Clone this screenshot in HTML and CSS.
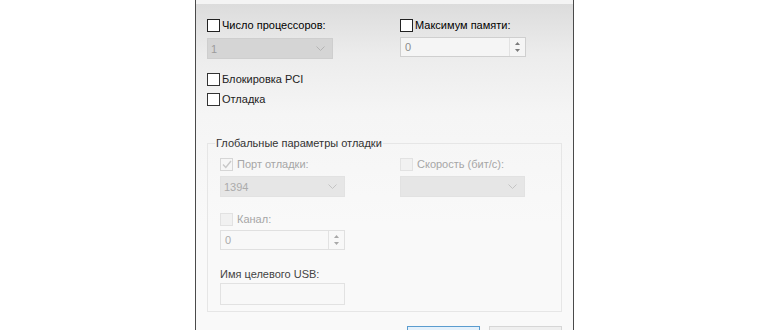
FILE: index.html
```html
<!DOCTYPE html>
<html lang="ru">
<head>
  <meta charset="UTF-8" />
  <title>Дополнительные параметры загрузки</title>
  <link rel="stylesheet" href="styles.css">
</head>
<body>
  <div class="dialog">
    <div class="frame-top"></div>
    <div class="dialog-body">
      <div class="grid top-grid">
        <div class="col">
          <label class="check strong"><span class="box"></span>Число процессоров:</label>
          <div class="select sel-dark"><span>1</span><svg class="chev" width="9" height="5" viewBox="0 0 9 5"><polyline points="0.5,0.5 4.5,4.5 8.5,0.5" fill="none" stroke="#b4b4b4" stroke-width="1"/></svg></div>
          <label class="check gap-pci"><span class="box"></span>Блокировка PCI</label>
          <label class="check gap-dbg"><span class="box"></span>Отладка</label>
        </div>
        <div class="col">
          <label class="check strong"><span class="box"></span>Максимум памяти:</label>
          <div class="spin spin-top"><span>0</span>
            <span class="arrows">
              <svg width="5" height="3" viewBox="0 0 5 3"><polygon points="2.5,0 5,3 0,3" fill="#7a7a7a"/></svg>
              <svg width="5" height="3" viewBox="0 0 5 3"><polygon points="0,0 5,0 2.5,3" fill="#7a7a7a"/></svg>
            </span>
          </div>
        </div>
      </div>

      <fieldset class="group">
        <legend>Глобальные параметры отладки</legend>
        <div class="grid inner-grid">
          <div class="col">
            <label class="check off"><span class="box checked"><svg width="10" height="9" viewBox="0 0 10 9"><polyline points="1,4.5 3.8,7.5 9,1" fill="none" stroke="#c8c8c8" stroke-width="1.4"/></svg></span>Порт отладки:</label>
            <div class="select sel-light"><span>1394</span><svg class="chev" width="9" height="5" viewBox="0 0 9 5"><polyline points="0.5,0.5 4.5,4.5 8.5,0.5" fill="none" stroke="#c4c4c4" stroke-width="1"/></svg></div>
            <label class="check off gap-chan"><span class="box"></span>Канал:</label>
            <div class="spin spin-chan"><span>0</span>
              <span class="arrows">
                <svg width="5" height="3" viewBox="0 0 5 3"><polygon points="2.5,0 5,3 0,3" fill="#a8a8a8"/></svg>
                <svg width="5" height="3" viewBox="0 0 5 3"><polygon points="0,0 5,0 2.5,3" fill="#a8a8a8"/></svg>
              </span>
            </div>
            <div class="field-label">Имя целевого USB:</div>
            <div class="textbox"></div>
          </div>
          <div class="col">
            <label class="check off"><span class="box"></span>Скорость (бит/с):</label>
            <div class="select sel-light"><span></span><svg class="chev" width="9" height="5" viewBox="0 0 9 5"><polyline points="0.5,0.5 4.5,4.5 8.5,0.5" fill="none" stroke="#c4c4c4" stroke-width="1"/></svg></div>
          </div>
        </div>
      </fieldset>

      <div class="buttons">
        <button class="btn ok" aria-label="ОК"></button>
        <button class="btn" aria-label="Отмена"></button>
      </div>
    </div>
  </div>
</body>
</html>
```

FILE: styles.css
```css
html, body { margin: 0; height: 330px; overflow: hidden; background: #fff; }
body { font-family: "Liberation Sans", Arial, sans-serif; font-size: 11px; color: #222; }

.dialog { box-sizing: border-box; width: 379px; margin-left: 195px; height: 360px; border-left: 1px solid #4a4a4a; border-right: 1px solid #4a4a4a; }
.frame-top { height: 4px; background: #f4f4f4; }
.dialog-body { height: 356px; padding-top: 13px; box-sizing: border-box; background: linear-gradient(#dcdcdc 0, #ececec 50px, #f5f5f5 110px, #f9f9f9 220px); }

.grid { display: grid; grid-template-columns: 193px 1fr; }
.top-grid { padding-left: 11px; }
.inner-grid { grid-template-columns: 180px 1fr; }
.col { display: flex; flex-direction: column; align-items: flex-start; }

.check { display: flex; align-items: center; height: 16px; line-height: 16px; white-space: nowrap; }
.check .box { box-sizing: border-box; width: 13px; height: 13px; border: 1px solid #333; background: #fff; margin-right: 2px; display: flex; align-items: center; justify-content: center; }
.check.strong { color: #000; }
.check.strong .box { border-color: #222; }
.check.off { color: #a6a6a6; }
.check.off .box { border-color: #e2e2e2; background: #f1f1f1; margin-right: 4px; }
.check.off .box.checked { border-color: #d6d6d6; background: #f6f6f6; }
.gap-pci { margin-top: 12px; }
.gap-dbg { margin-top: 4px; }
.gap-chan { margin-top: 14px; }

.select { box-sizing: border-box; width: 126px; height: 21px; margin-top: 5px; display: flex; align-items: center; justify-content: space-between; padding: 0 7px 0 3px; color: #9c9c9c; }
.sel-dark { background: #d5d5d5; border: 1px solid #cecece; }
.sel-light { width: 125px; margin-top: 4px; background: #e6e6e6; border: 1px solid #e2e2e2; color: #ababab; }

.spin { box-sizing: border-box; width: 126px; height: 20px; display: flex; align-items: center; justify-content: space-between; padding-left: 4px; background: #f5f5f5; border: 1px solid #cfcfcf; color: #8c8c8c; }
.spin-top { margin-top: 4px; }
.spin-chan { width: 125px; margin-top: 3px; border-color: #e0e0e0; background: #f8f8f8; color: #ababab; }
.arrows { box-sizing: border-box; width: 15px; height: 18px; margin-right: 1px; border-left: 1px solid #e2e2e2; display: flex; flex-direction: column; align-items: center; justify-content: center; gap: 4px; }

.group { box-sizing: border-box; width: 355px; margin: 28px 0 0 11px; padding: 5px 0 6px 12px; border: 1px solid #e6e6e6; min-width: 0; }
.group legend { padding: 0 1px; margin-left: -5px; line-height: 16px; color: #333; }
.field-label { margin-top: 16px; line-height: 16px; color: #444; }
.textbox { box-sizing: border-box; width: 125px; height: 22px; margin-top: 1px; background: #f8f8f8; border: 1px solid #e2e2e2; }

.buttons { display: flex; justify-content: flex-end; gap: 9px; margin-top: 14px; padding-right: 11px; }
.btn { box-sizing: border-box; width: 73px; height: 23px; font: inherit; background: #efefef; border: 1px solid #d6d6d6; padding: 0; }
.btn.ok { background: #e5f1fb; border-color: #5a9ccf; }
```
